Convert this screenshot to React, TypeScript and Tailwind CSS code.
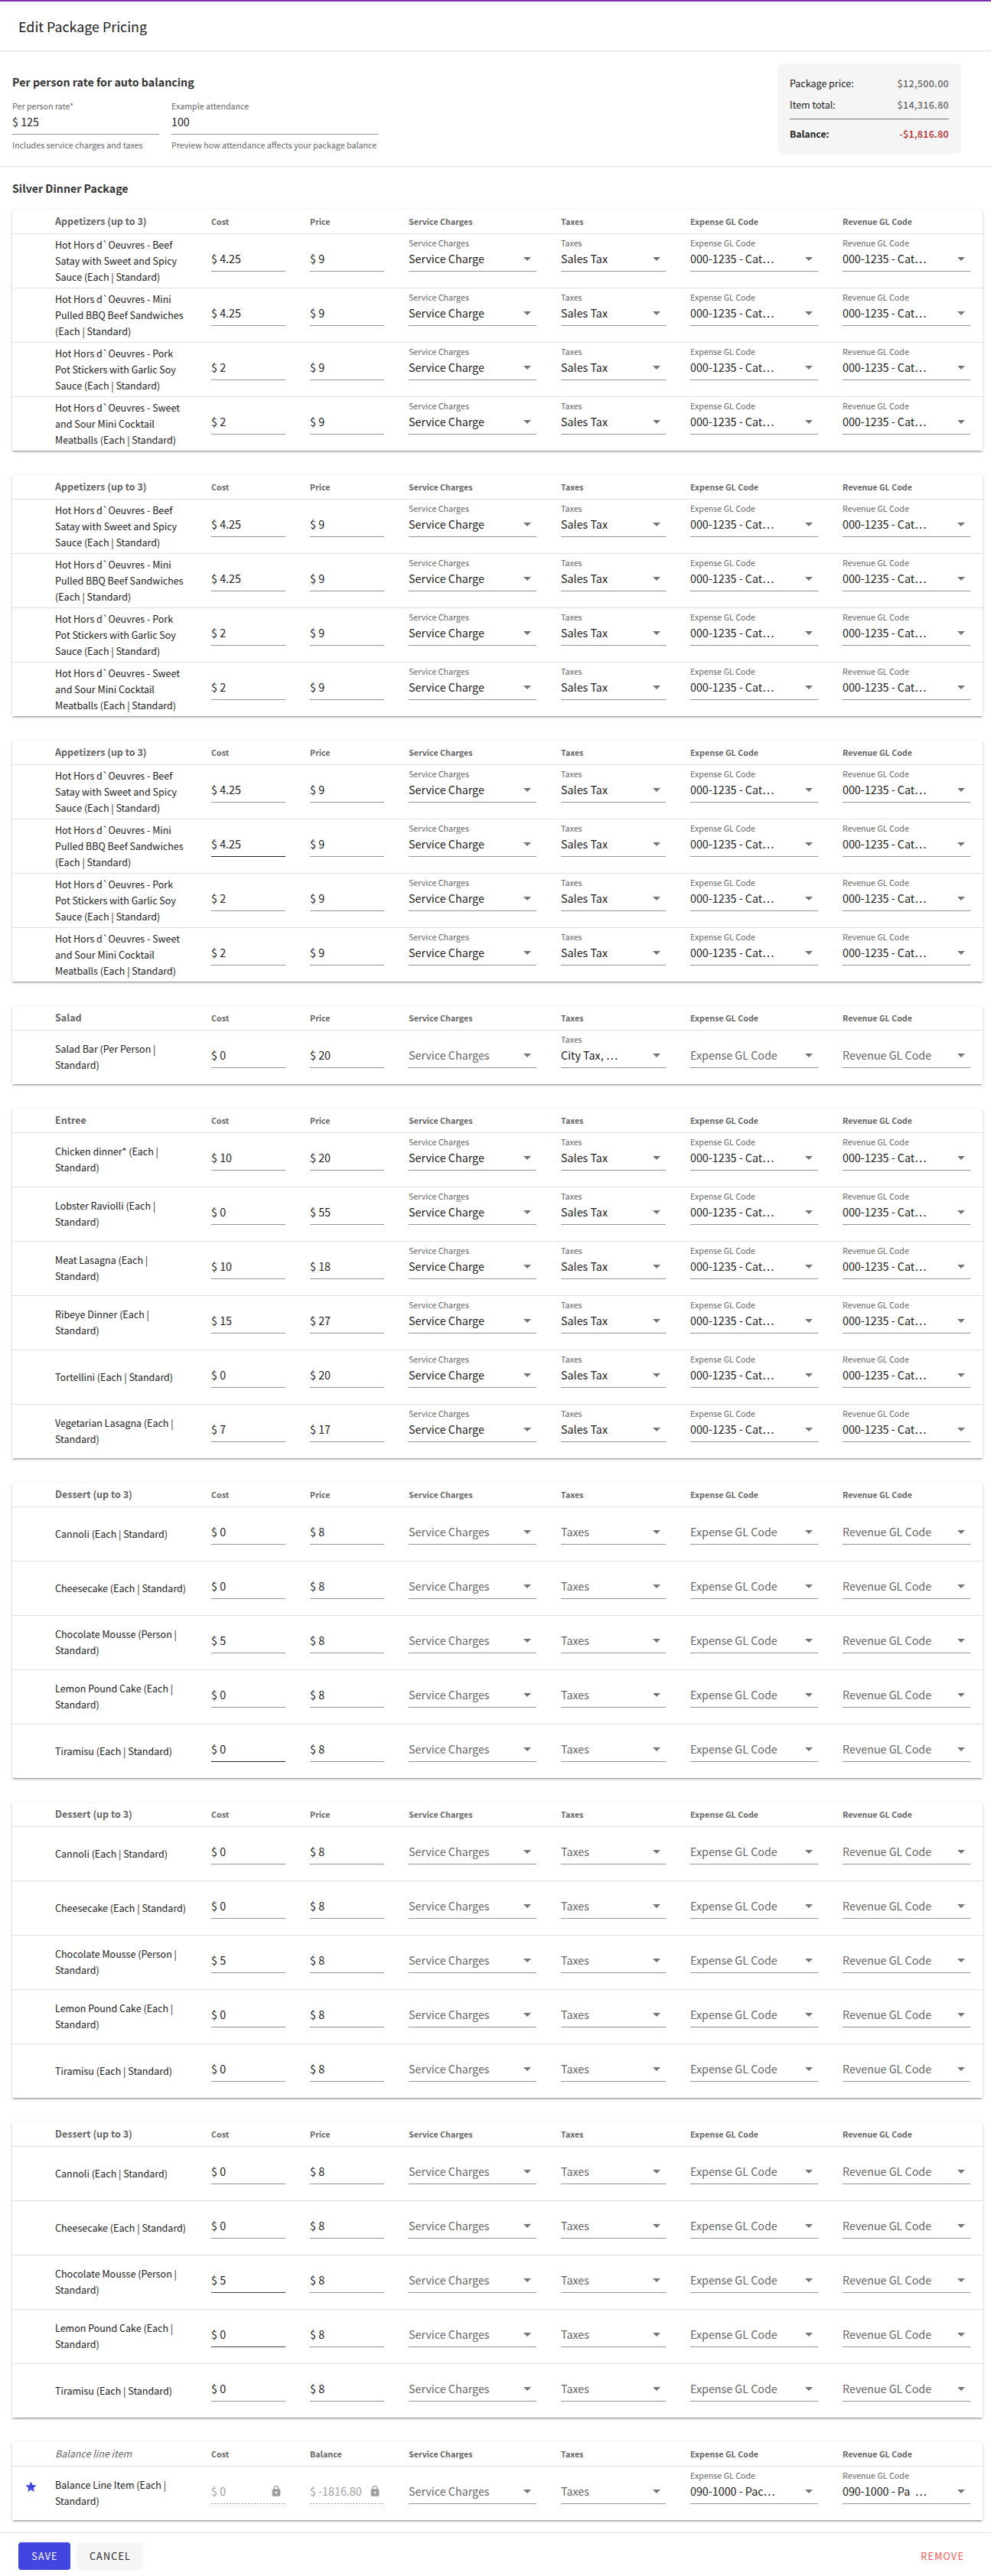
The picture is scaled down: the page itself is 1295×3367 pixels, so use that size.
import React from 'react';

type Item = {
  name: string;
  cost: string;
  price: string;
  charge?: string;
  tax?: string;
  expense?: string;
  revenue?: string;
  costLine?: string;
  locked?: boolean;
};

type Group = { title: string; items: Item[]; balance?: boolean };

const coded = {
  charge: 'Service Charge',
  tax: 'Sales Tax',
  expense: '000-1235 - Cat…',
  revenue: '000-1235 - Cat…',
};

const appetizers = (costLines: Record<number, string> = {}): Group => ({
  title: 'Appetizers (up to 3)',
  items: [
    { name: 'Hot Hors d`Oeuvres - Beef Satay with Sweet and Spicy Sauce (Each | Standard)', cost: '4.25', price: '9', ...coded },
    { name: 'Hot Hors d`Oeuvres - Mini Pulled BBQ Beef Sandwiches (Each | Standard)', cost: '4.25', price: '9', ...coded },
    { name: 'Hot Hors d`Oeuvres - Pork Pot Stickers with Garlic Soy Sauce (Each | Standard)', cost: '2', price: '9', ...coded },
    { name: 'Hot Hors d`Oeuvres - Sweet and Sour Mini Cocktail Meatballs (Each | Standard)', cost: '2', price: '9', ...coded },
  ].map((item, i) => ({ ...item, costLine: costLines[i] })),
});

const desserts = (costLines: Record<number, string> = {}): Group => ({
  title: 'Dessert (up to 3)',
  items: [
    { name: 'Cannoli (Each | Standard)', cost: '0', price: '8' },
    { name: 'Cheesecake (Each | Standard)', cost: '0', price: '8' },
    { name: 'Chocolate Mousse (Person | Standard)', cost: '5', price: '8' },
    { name: 'Lemon Pound Cake (Each | Standard)', cost: '0', price: '8' },
    { name: 'Tiramisu (Each | Standard)', cost: '0', price: '8' },
  ].map((item, i) => ({ ...item, costLine: costLines[i] })),
});

const groups: Group[] = [
  appetizers(),
  appetizers(),
  appetizers({ 1: 'bg-[#212121]' }),
  { title: 'Salad', items: [{ name: 'Salad Bar (Per Person | Standard)', cost: '0', price: '20', tax: 'City Tax, …' }] },
  {
    title: 'Entree',
    items: [
      { name: 'Chicken dinner* (Each | Standard)', cost: '10', price: '20', ...coded },
      { name: 'Lobster Raviolli (Each | Standard)', cost: '0', price: '55', ...coded },
      { name: 'Meat Lasagna (Each | Standard)', cost: '10', price: '18', ...coded },
      { name: 'Ribeye Dinner (Each | Standard)', cost: '15', price: '27', ...coded },
      { name: 'Tortellini (Each | Standard)', cost: '0', price: '20', ...coded },
      { name: 'Vegetarian Lasagna (Each | Standard)', cost: '7', price: '17', ...coded },
    ],
  },
  desserts({ 4: 'bg-[#212121]' }),
  desserts(),
  desserts({ 2: 'bg-[#424242]', 3: 'bg-[#424242]' }),
  {
    title: 'Balance line item',
    balance: true,
    items: [
      {
        name: 'Balance Line Item (Each | Standard)',
        cost: '0',
        price: '-1816.80',
        expense: '090-1000 - Pac…',
        revenue: '090-1000 - Pa  …',
        locked: true,
      },
    ],
  },
];

const COLS = 'grid grid-cols-[228px_97px_97px_167px_137px_167px_167px] gap-x-8';

function Star() {
  return (
    <svg viewBox="0 0 24 24" className="size-[17px] shrink-0 fill-[#4245e0]">
      <path d="M12 17.27L18.18 21l-1.64-7.03L22 9.24l-7.19-.61L12 2 9.19 8.63 2 9.24l5.46 4.73L5.82 21z" />
    </svg>
  );
}

function Lock() {
  return (
    <svg viewBox="0 0 24 24" className="mr-1 size-4 shrink-0 fill-[#9e9e9e]">
      <path d="M18 8h-1V6c0-2.76-2.24-5-5-5S7 3.24 7 6v2H6c-1.1 0-2 .9-2 2v10c0 1.1.9 2 2 2h12c1.1 0 2-.9 2-2V10c0-1.1-.9-2-2-2zm-6 9c-1.1 0-2-.9-2-2s.9-2 2-2 2 .9 2 2-.9 2-2 2zm3.1-9H8.9V6c0-1.71 1.39-3.1 3.1-3.1s3.1 1.39 3.1 3.1v2z" />
    </svg>
  );
}

function Money({ value, line = 'bg-[#949494]', locked }: { value: string; line?: string; locked?: boolean }) {
  return (
    <div className="pt-[22px]">
      <div className={`flex h-5 items-center justify-between text-[14.3px] leading-5 ${locked ? 'text-[#9e9e9e]' : 'text-[#212121]'}`}>
        <span className="whitespace-nowrap">$ {value}</span>
        {locked && <Lock />}
      </div>
      {locked ? (
        <div className="mt-1.5 h-px bg-[repeating-linear-gradient(to_right,#949494_0,#949494_2px,transparent_2px,transparent_4px)]" />
      ) : (
        <div className={`mt-1.5 h-px ${line}`} />
      )}
    </div>
  );
}

function Select({ label, value }: { label: string; value?: string }) {
  return (
    <div className="pt-1">
      <div className="h-4 text-[10.7px] leading-4 text-[#666]">{value ? label : ''}</div>
      <div className="mt-0.5 flex h-5 items-center justify-between pr-[7px] text-[14.3px] leading-5">
        <span className={`whitespace-pre ${value ? 'text-[#212121]' : 'text-[#666]'}`}>{value ?? label}</span>
        <svg viewBox="0 0 10 5" className="mt-px h-[5px] w-2.5 shrink-0 fill-[#757575]">
          <path d="M0 0h10L5 5z" />
        </svg>
      </div>
      <div className="mt-1.5 h-px bg-[#949494]" />
    </div>
  );
}

function Card({ group }: { group: Group }) {
  return (
    <section className="bg-white shadow-[0_3px_1px_-2px_rgba(0,0,0,0.2),0_2px_2px_0_rgba(0,0,0,0.14),0_1px_5px_0_rgba(0,0,0,0.12)]">
      <header className={`${COLS} h-8 items-center border-b border-[#e0e0e0] text-[10.7px] font-bold text-[#666]`}>
        <h3 className={`pl-14 text-[12.5px] ${group.balance ? 'font-normal italic' : 'font-bold'}`}>{group.title}</h3>
        <span className="pt-px">Cost</span>
        <span className="pt-px">{group.balance ? 'Balance' : 'Price'}</span>
        <span className="pt-px">Service Charges</span>
        <span className="pt-px">Taxes</span>
        <span className="pt-px">Expense GL Code</span>
        <span className="pt-px">Revenue GL Code</span>
      </header>
      <div className="divide-y divide-[#e0e0e0]">
        {group.items.map((item) => (
          <div key={item.name} className={`${COLS} box-content h-[70px]`}>
            <div className="flex items-center pb-0.5">
              <div className="flex w-full">
                <div className="flex h-[21px] w-14 shrink-0 items-center pt-1.5 pl-[15.5px]">{group.balance && <Star />}</div>
                <p className="text-[12.5px] leading-[21px] text-[#212121]">{item.name}</p>
              </div>
            </div>
            <Money value={item.cost} line={item.costLine} locked={item.locked} />
            <Money value={item.price} locked={item.locked} />
            <Select label="Service Charges" value={item.charge} />
            <Select label="Taxes" value={item.tax} />
            <Select label="Expense GL Code" value={item.expense} />
            <Select label="Revenue GL Code" value={item.revenue} />
          </div>
        ))}
      </div>
    </section>
  );
}

function Field({ label, value, hint, width }: { label: string; value: string; hint: string; width: string }) {
  return (
    <div className={`${width} text-[10.7px] leading-4 text-[#666]`}>
      <div>{label}</div>
      <div className="mt-0.5 border-b border-[#949494] pb-1.5 text-[14.3px] leading-5 text-[#212121]">{value}</div>
      <div className="mt-1.5 whitespace-nowrap">{hint}</div>
    </div>
  );
}

export default function App() {
  return (
    <div className="min-h-[3367px] w-[1295px] border-t-2 border-[#7b2fa8] bg-white font-['Noto_Sans_CJK_SC',sans-serif]">
      <header className="flex h-[65px] items-center border-b border-[#e0e0e0] px-6">
        <h1 className="text-[17.85px] leading-6 text-[#212121]">Edit Package Pricing</h1>
      </header>

      <section className="flex h-[151px] justify-between border-b border-[#e0e0e0] pr-[39px] pl-4">
        <div className="pt-7">
          <h2 className="text-[14.25px] leading-6 font-bold text-[#333]">Per person rate for auto balancing</h2>
          <div className="mt-3 flex gap-4">
            <Field label="Per person rate*" value="$ 125" hint="Includes service charges and taxes" width="w-48" />
            <Field label="Example attendance" value="100" hint="Preview how attendance affects your package balance" width="w-[270px]" />
          </div>
        </div>
        <div className="mt-4 h-[118px] w-60 rounded-lg bg-[#f5f5f5] px-4 pt-[15px] text-[12.5px] text-[#212121]">
          <div className="flex h-[22px] items-center justify-between">
            <span>Package price:</span>
            <span className="font-medium tracking-[0.3px] text-[#666]">$12,500.00</span>
          </div>
          <div className="mt-1.5 flex h-[22px] items-center justify-between">
            <span>Item total:</span>
            <span className="font-medium tracking-[0.3px] text-[#666]">$14,316.80</span>
          </div>
          <div className="mt-[7px] h-px bg-[#757575]" />
          <div className="mt-2 flex h-[22px] items-center justify-between">
            <span className="text-[12.2px] font-bold">Balance:</span>
            <span className="font-medium tracking-[0.3px] text-[#b71c1c]">-$1,816.80</span>
          </div>
        </div>
      </section>

      <main className="py-4 pr-[11px] pl-4">
        <h2 className="mb-4 text-[14.2px] leading-6 font-bold text-[#333]">Silver Dinner Package</h2>
        <div className="flex flex-col gap-8">
          {groups.map((group, i) => (
            <Card key={i} group={group} />
          ))}
        </div>
      </main>

      <footer className="flex items-center justify-between border-t border-[#e0e0e0] px-6 pt-3 pb-2 text-[12.5px] leading-5 tracking-[1.25px]">
        <div className="flex gap-2">
          <button className="h-9 w-[68px] rounded bg-[#4245e0] pl-px text-white">SAVE</button>
          <button className="h-9 w-[87px] rounded bg-[#f5f5f5] pl-px text-[#212121]">CANCEL</button>
        </div>
        <button className="h-9 pr-[11px] text-[#ff5252]">REMOVE</button>
      </footer>
    </div>
  );
}
